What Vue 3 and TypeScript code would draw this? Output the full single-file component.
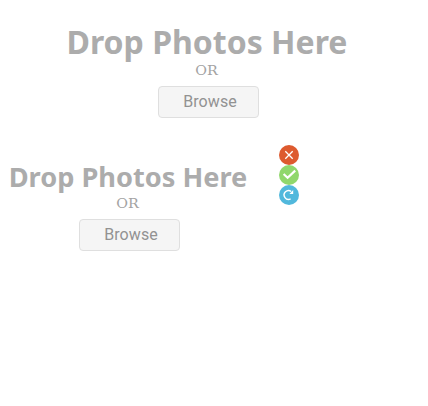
<script setup lang="ts">
interface DropZone {
  id: string
  title: string
  size: 'large' | 'small'
}

const zones: DropZone[] = [
  { id: 'large', title: 'Drop Photos Here', size: 'large' },
  { id: 'small', title: 'Drop Photos Here', size: 'small' },
]
</script>

<template>
  <main class="sheet">
    <section v-for="zone in zones" :key="zone.id" class="zone" :class="zone.size">
      <h2 class="title">{{ zone.title }}</h2>
      <span class="or">OR</span>
      <button type="button" class="browse">Browse</button>
    </section>
    <div class="status">
      <svg viewBox="0 0 20 20" class="icon">
        <circle cx="10" cy="10" r="10" fill="#dd5a2f" />
        <path d="M6.3 6.3L13.7 13.7M13.7 6.3L6.3 13.7" stroke-width="1.3" />
      </svg>
      <svg viewBox="0 0 20 20" class="icon">
        <circle cx="10" cy="10" r="10" fill="#90d76c" />
        <path d="M4.6 9L8.6 12.7L16.2 5.6" stroke-width="2.2" />
      </svg>
      <svg viewBox="0 0 20 20" class="icon">
        <circle cx="10" cy="10" r="10" fill="#51b8dc" />
        <path d="M12.2 6.5A4.4 4.4 0 1 0 11.6 13.9" stroke-width="1.4" />
        <path d="M14.2 4.9V9H10.4Z" class="head" />
      </svg>
    </div>
  </main>
</template>

<style>
body {
  background: #fff;
}
</style>

<style scoped>
.sheet {
  display: grid;
  grid-template-columns: 256px 172px;
  grid-template-rows: 133px 120px;
  width: 428px;
  height: 406px;
  overflow: hidden;
}
.zone {
  display: flex;
  flex-direction: column;
  align-items: center;
}
.large {
  grid-column: 1 / 3;
  width: 412px;
  padding-top: 22px;
}
.small {
  grid-column: 1;
  width: 254px;
  padding-top: 24px;
}
.title {
  margin: 0 0 0 2px;
  height: 42px;
  font: 700 32px/40px "Noto Sans", sans-serif;
  color: #acacac;
  white-space: nowrap;
}
.small .title {
  height: 40px;
  font-size: 27.2px;
}
.or {
  height: 15px;
  font: 12px/15px "DejaVu Serif", serif;
  color: #a3a3a3;
  transform: scaleX(1.19);
}
.browse {
  box-sizing: border-box;
  width: 101px;
  height: 32px;
  margin: 7px 0 0 5px;
  padding: 0 0 1px 3px;
  border: 1px solid #dfdfdf;
  border-radius: 4px;
  background: #f5f5f5;
  font: 16px/29px Roboto, sans-serif;
  letter-spacing: 0.1px;
  color: #929292;
}
.status {
  grid-column: 2;
  padding: 12px 0 0 23px;
  display: flex;
  flex-direction: column;
}
.icon {
  display: block;
  width: 20px;
  height: 20px;
  fill: none;
  stroke: #fff;
}
.icon circle {
  stroke: none;
}
.head {
  fill: #fff;
  stroke: none;
}
</style>
